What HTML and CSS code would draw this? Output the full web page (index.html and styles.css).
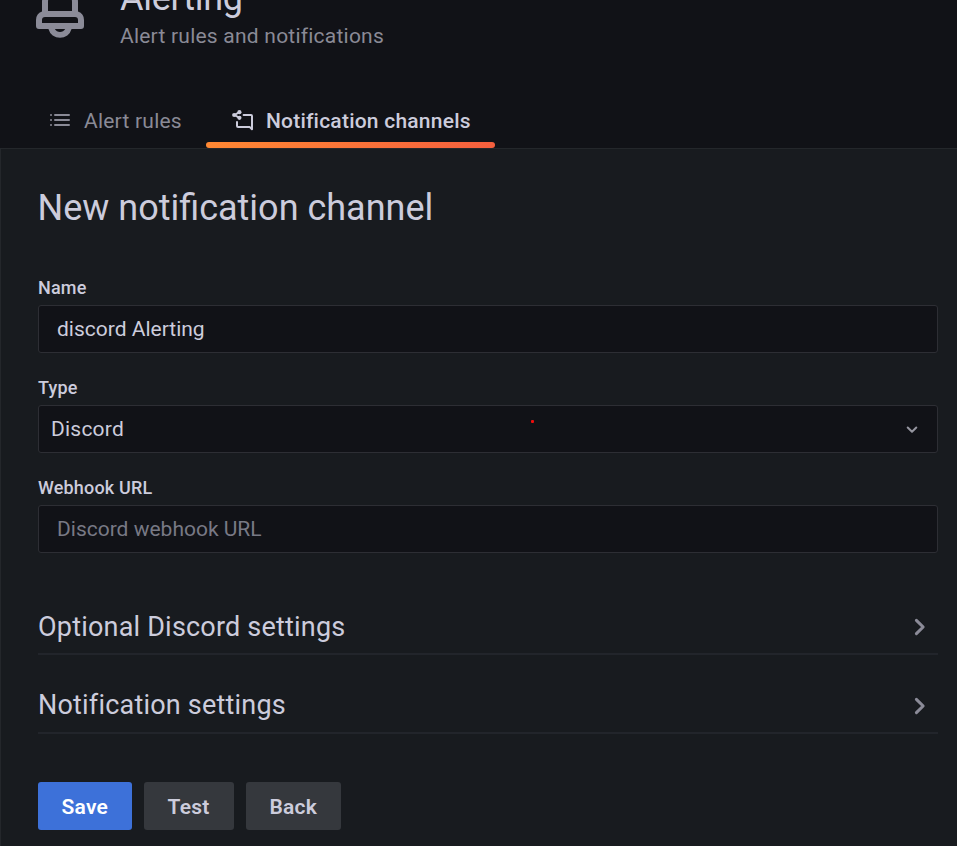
FILE: index.html
```html
<!DOCTYPE html>
<html lang="en">
<head>
<meta charset="utf-8">
<title>Alerting</title>
<link rel="stylesheet" href="styles.css">
</head>
<body>
<header class="page-header">
  <div class="brand">
    <svg class="bell" viewBox="0 0 24 24"><path d="M18,13.18V10a6,6,0,0,0-5-5.91V3a1,1,0,0,0-2,0V4.09A6,6,0,0,0,6,10v3.18A3,3,0,0,0,4,16v2a1,1,0,0,0,1,1H8.14a4,4,0,0,0,7.72,0H19a1,1,0,0,0,1-1V16A3,3,0,0,0,18,13.18ZM8,10a4,4,0,0,1,8,0v3H8Zm4,10a2,2,0,0,1-1.72-1h3.44A2,2,0,0,1,12,20Zm6-3H6V16a1,1,0,0,1,1-1H17a1,1,0,0,1,1,1Z"/></svg>
    <div>
      <h1 class="brand-title">Alerting</h1>
      <div class="brand-sub">Alert rules and notifications</div>
    </div>
  </div>
  <nav class="tabs">
    <a class="tab">
      <svg class="tab-icon" viewBox="0 0 24 24"><path d="M3 7h.01M3 12h.01M3 17h.01M7 7h14M7 12h14M7 17h14"/></svg>
      <span>Alert rules</span>
    </a>
    <a class="tab active">
      <svg class="tab-icon" viewBox="0 0 24 24"><path d="M13.600 7H21a1 1 0 0 1 1 1v13.300l-2.200-2.200H8a1 1 0 0 1-1-1V14M9.400 4.200 4.500 7l4.900 2.800"/><g class="dots"><circle cx="9.400" cy="4.200" r="2.100"/><circle cx="4.200" cy="7" r="2.100"/><circle cx="9.400" cy="9.800" r="2.100"/></g></svg>
      <span>Notification channels</span>
    </a>
  </nav>
</header>
<main class="page-body">
  <h2 class="title">New notification channel</h2>
  <div class="field">
    <label class="label" for="name">Name</label>
    <input class="control" id="name" type="text" value="discord Alerting">
  </div>
  <div class="field">
    <div class="label">Type</div>
    <div class="control select">
      <span>Discord</span>
      <i class="marker"></i>
      <svg class="chevron" viewBox="0 0 24 24"><path d="m7.700 10.500 4.300 4.300 4.300-4.300"/></svg>
    </div>
  </div>
  <div class="field">
    <label class="label" for="url">Webhook URL</label>
    <input class="control" id="url" type="text" placeholder="Discord webhook URL">
  </div>
  <section class="sections">
    <div class="section"><h3>Optional Discord settings</h3><svg class="arrow" viewBox="0 0 24 24"><path d="m9.600 7.600 4.500 4.400-4.500 4.400"/></svg></div>
    <div class="section"><h3>Notification settings</h3><svg class="arrow" viewBox="0 0 24 24"><path d="m9.600 7.600 4.500 4.400-4.500 4.400"/></svg></div>
  </section>
  <div class="actions">
    <button class="btn primary">Save</button>
    <button class="btn">Test</button>
    <button class="btn">Back</button>
  </div>
</main>
</body>
</html>
```
FILE: styles.css
```css
* { box-sizing: border-box; }
body {
  margin: 0;
  height: 846px;
  overflow: hidden;
  display: flex;
  flex-direction: column;
  background: #111217;
  color: #ccccdc;
  font-family: Roboto, "Liberation Sans", sans-serif;
  font-size: 21px;
  line-height: 33px;
  letter-spacing: 0.225px;
}
h1, h2, h3 { margin: 0; font-weight: 400; }
.page-header {
  height: 148px;
  flex: none;
  display: flex;
  flex-direction: column;
  justify-content: space-between;
}
.brand { display: flex; padding-left: 24px; height: 53px; align-items: flex-end; }
.bell { width: 72px; height: 72px; margin: 0 24px 9px 0; fill: #8b8b98; flex: none; }
.brand-title { font-size: 36px; line-height: 42px; letter-spacing: -0.3px; margin-bottom: 1px; }
.brand-sub { color: #8a8a96; }
.tabs { display: flex; height: 54px; padding-left: 24px; }
.tab {
  display: flex;
  padding: 11px 24px 0;
  color: #8a8a96;
}
.tab-icon {
  width: 24px;
  height: 24px;
  margin: 3px 12px 0 0;
  fill: none;
  stroke: currentColor;
  stroke-width: 2;
  stroke-linecap: round;
  stroke-linejoin: round;
}
.dots { fill: currentColor; stroke: none; }
.tab.active {
  position: relative;
  color: #ccccdc;
  font-weight: 500;
}
.tab.active::after {
  content: "";
  position: absolute;
  left: 0;
  right: 0;
  bottom: 0;
  height: 6px;
  border-radius: 3px;
  background: linear-gradient(to right, #ff8833, #f55f3e);
}
.page-body {
  flex: 1;
  background: #181b1f;
  border: 1px solid #24272b;
  border-width: 1px 0 0 1px;
  padding: 38px 19px 0 37px;
}
.title { font-size: 36px; line-height: 42px; letter-spacing: 0; margin: 0 0 48px -0.5px; }
.field { margin-bottom: 24px; }
.label {
  display: block;
  font-size: 18px;
  font-weight: 500;
  line-height: 22px;
  margin-bottom: 6px;
  letter-spacing: 0.18px;
}
.control {
  display: block;
  width: 100%;
  height: 48px;
  padding: 0 18px;
  background: #111217;
  border: 1px solid #2d2e34;
  border-radius: 3px;
  color: #ccccdc;
  font: inherit;
  letter-spacing: 0;
}
.control::placeholder { color: #787985; opacity: 1; }
.select {
  display: flex;
  position: relative;
  align-items: center;
  justify-content: space-between;
  padding: 0 13px 0 12px;
  letter-spacing: 0.225px;
}
.marker { position: absolute; left: 492px; top: 14px; width: 3px; height: 3px; background: #f00c0c; border-radius: 1px; }
.chevron { width: 24px; height: 24px; fill: none; stroke: #95959f; stroke-width: 2; stroke-linecap: round; stroke-linejoin: round; }
.sections { margin-top: 45px; }
.section {
  display: flex;
  align-items: flex-start;
  justify-content: space-between;
  height: 57px;
  padding-top: 13px;
  border-bottom: 2px solid #22252b;
}
.section + .section { margin-top: 22px; padding-top: 12px; }
.section h3 { font-size: 27px; line-height: 33px; letter-spacing: 0.2px; }
.arrow { width: 36px; height: 36px; margin-top: -2px; fill: none; stroke: #8b8b98; stroke-width: 2; stroke-linecap: round; stroke-linejoin: round; }
.section + .section .arrow { margin-top: -1px; }
.actions { display: flex; gap: 12px; margin-top: 48px; }
.btn {
  height: 48px;
  padding: 2px 24px 0;
  border: 0;
  border-radius: 3px;
  background: #35383d;
  color: #ccccdc;
  font: inherit;
  font-weight: 600;
  letter-spacing: inherit;
}
.primary { background: #3d71d9; color: #fff; padding: 2px 23.500px 0; }
```
